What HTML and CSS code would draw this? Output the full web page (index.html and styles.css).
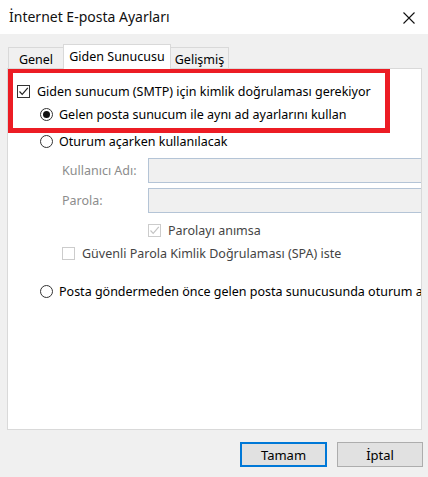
FILE: index.html
```html
<!DOCTYPE html>
<html lang="tr">
<head>
<meta charset="utf-8">
<title>İnternet E-posta Ayarları</title>
<link rel="stylesheet" href="styles.css">
</head>
<body>
<div class="window">
  <div class="titlebar">
    <span class="title">İnternet E-posta Ayarları</span>
    <svg class="close" width="12" height="12" viewBox="0 0 12 12"><path d="M0.5 0.5 L11.5 11.5 M11.5 0.5 L0.5 11.5" stroke="#111" stroke-width="1.1" fill="none"/></svg>
  </div>
  <div class="tabs">
    <div class="tab">Genel</div>
    <div class="tab active">Giden Sunucusu</div>
    <div class="tab">Gelişmiş</div>
  </div>
  <div class="panel">
    <div class="highlight"></div>
    <div class="row row-auth">
      <span class="check checked"><svg width="11" height="11" viewBox="0 0 11 11"><path d="M1.5 5.5 L4.2 8.3 L9.8 1.8" stroke="#222" stroke-width="1.2" fill="none"/></svg></span>
      <span class="label">Giden sunucum (SMTP) için kimlik doğrulaması gerekiyor</span>
    </div>
    <div class="row row-radio">
      <span class="radio selected"></span>
      <span class="label">Gelen posta sunucum ile aynı ad ayarlarını kullan</span>
    </div>
    <div class="row row-radio row-logon">
      <span class="radio"></span>
      <span class="label">Oturum açarken kullanılacak</span>
    </div>
    <div class="field field-user">
      <span class="field-label">Kullanıcı Adı:</span>
      <span class="input"></span>
    </div>
    <div class="field">
      <span class="field-label">Parola:</span>
      <span class="input"></span>
    </div>
    <div class="row row-remember">
      <span class="check disabled checked"><svg width="11" height="11" viewBox="0 0 11 11"><path d="M1.5 5.5 L4.2 8.3 L9.8 1.8" stroke="#c4c4c4" stroke-width="1.2" fill="none"/></svg></span>
      <span class="label dim">Parolayı anımsa</span>
    </div>
    <div class="row row-spa">
      <span class="check disabled"></span>
      <span class="label dim">Güvenli Parola Kimlik Doğrulaması (SPA) iste</span>
    </div>
    <div class="row row-radio row-before">
      <span class="radio"></span>
      <span class="label">Posta göndermeden önce gelen posta sunucusunda oturum açın</span>
    </div>
  </div>
  <div class="buttons">
    <button class="btn default">Tamam</button>
    <button class="btn">İptal</button>
  </div>
</div>
</body>
</html>
```
FILE: styles.css
```css
* { box-sizing: border-box; }
html, body { margin: 0; padding: 0; }
body {
  width: 428px;
  height: 477px;
  overflow: hidden;
  background: #f0f0f0;
  font-family: "Noto Sans", "Open Sans", sans-serif;
  font-size: 12.5px;
  color: #000;
}
.window { width: 428px; height: 477px; }
.titlebar {
  height: 34px;
  background: #fff;
  display: flex;
  align-items: center;
  justify-content: space-between;
  padding: 0 13px 0 9px;
}
.title { font-size: 14px; color: #111; margin-top: -1px; }
.close { display: block; margin-top: 1px; }

.tabs {
  display: flex;
  align-items: flex-end;
  height: 24px;
  margin-top: 10px;
  padding-left: 8px;
}
.tab {
  height: 21px;
  border: 1px solid #d9d9d9;
  border-bottom: none;
  background: #f0f0f0;
  display: flex;
  align-items: center;
  justify-content: center;
  font-size: 12.5px;
  padding-top: 2px;
}
.tab:first-child { width: 55px; border-right: none; }
.tab.active {
  height: 25px;
  width: 108px;
  background: #fff;
  margin-bottom: -1px;
  position: relative;
  z-index: 2;
  padding-top: 0;
  padding-bottom: 2px;
}
.tab:last-child { width: 58px; border-left: none; }

.panel {
  position: relative;
  margin-left: 7px;
  width: 415px;
  height: 362px;
  background: #fff;
  border: 1px solid #d9d9d9;
  overflow: hidden;
}
.highlight {
  position: absolute;
  left: 0;
  top: -1px;
  width: 382px;
  height: 65px;
  border: 5px solid #ec1c24;
  pointer-events: none;
}
.row {
  display: flex;
  align-items: center;
  white-space: nowrap;
}
.row-auth { height: 22px; margin-top: 11px; padding-left: 9px; }
.row-radio { height: 24px; padding-left: 32px; }
.row-logon { margin-top: 3px; }
.row-remember { height: 22px; margin-top: 6px; padding-left: 140px; }
.row-spa { height: 22px; margin-top: 1px; padding-left: 54px; }
.row-before { margin-top: 15px; }

.check {
  width: 13px;
  height: 13px;
  border: 1px solid #333;
  background: #fff;
  flex: none;
  display: flex;
  align-items: center;
  justify-content: center;
  margin-right: 7px;
}
.check.disabled { border-color: #cccccc; }
.check svg { display: block; }
.radio {
  width: 13px;
  height: 13px;
  border: 1px solid #333;
  border-radius: 50%;
  background: #fff;
  flex: none;
  margin-right: 6px;
  position: relative;
}
.radio.selected::after {
  content: "";
  position: absolute;
  left: 2px;
  top: 2px;
  width: 7px;
  height: 7px;
  border-radius: 50%;
  background: #111;
}
.label { color: #000; }
.label.dim { color: #444; }

.field {
  display: flex;
  align-items: center;
  height: 25px;
  margin-top: 5px;
  padding-left: 54px;
  white-space: nowrap;
}
.field-label { width: 86px; flex: none; color: #8c8c8c; }
.input {
  flex: none;
  width: 300px;
  height: 25px;
  border: 1px solid #b4c4d6;
  background: #f0f0f0;
}

.buttons {
  display: flex;
  justify-content: flex-end;
  gap: 10px;
  margin-top: 12px;
  padding-right: 5px;
}
.btn {
  font-family: inherit;
  font-size: 13px;
  color: #000;
  background: #e1e1e1;
  border: 1px solid #adadad;
  height: 25px;
  width: 86px;
  padding: 0;
  margin: 0;
}
.btn.default { border: 2px solid #0078d7; width: 87px; }
```
